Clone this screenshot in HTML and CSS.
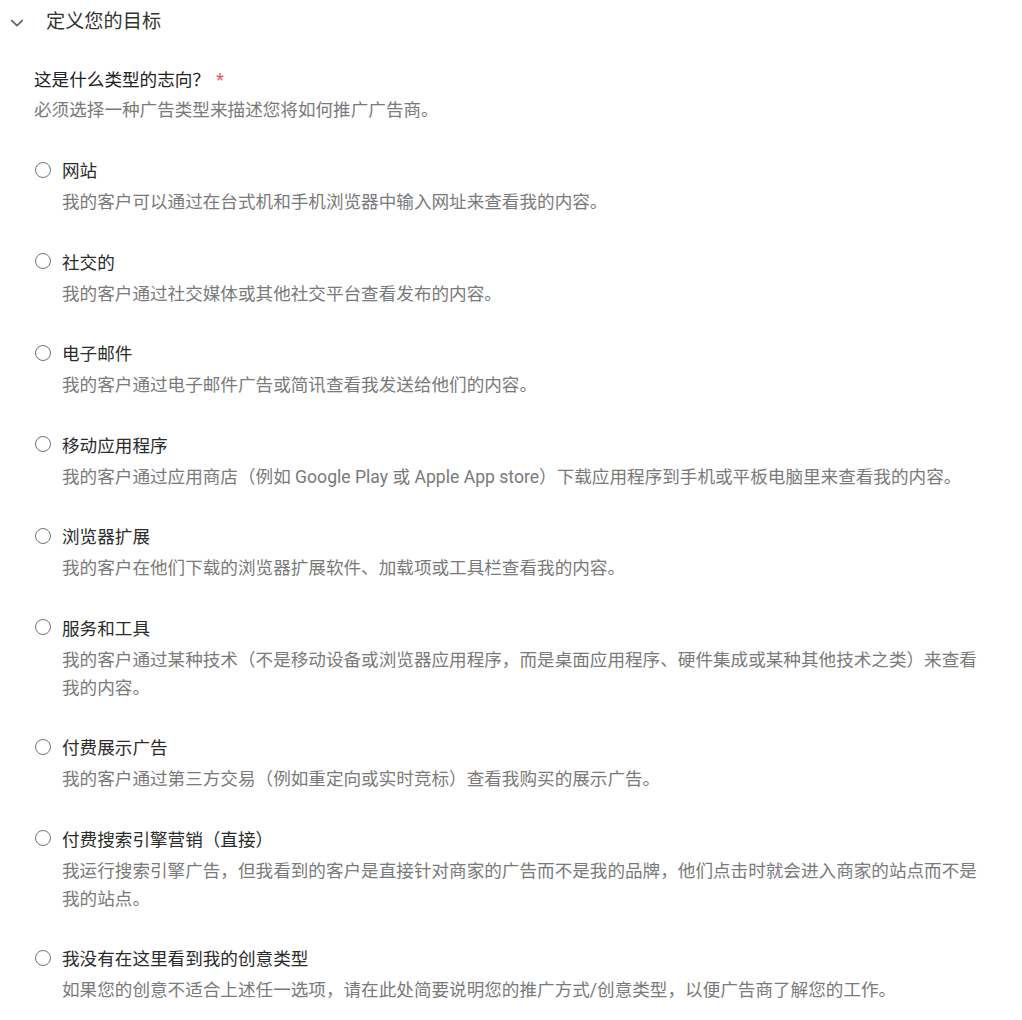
FILE: index.html
```html
<!DOCTYPE html>
<html lang="zh-CN">
<head>
<meta charset="utf-8">
<title>定义您的目标</title>
<link rel="stylesheet" href="styles.css">
</head>
<body>
<div class="page">
  <div class="section-head">
    <svg class="chevron" width="14" height="10" viewBox="0 0 14 10"><path d="M1.8 2.6 L7 7.6 L12.2 2.6" fill="none" stroke="#6a6a6a" stroke-width="1.9" stroke-linecap="round" stroke-linejoin="round"/></svg>
    <span class="section-title">定义您的目标</span>
  </div>
  <div class="question">
    <div class="q-title">这是什么类型的志向？ <span class="req">*</span></div>
    <div class="q-hint">必须选择一种广告类型来描述您将如何推广广告商。</div>
  </div>
  <div class="options">
    <div class="option">
      <div class="opt-row"><span class="radio"></span><span class="opt-label">网站</span></div>
      <div class="opt-desc">我的客户可以通过在台式机和手机浏览器中输入网址来查看我的内容。</div>
    </div>
    <div class="option">
      <div class="opt-row"><span class="radio"></span><span class="opt-label">社交的</span></div>
      <div class="opt-desc">我的客户通过社交媒体或其他社交平台查看发布的内容。</div>
    </div>
    <div class="option">
      <div class="opt-row"><span class="radio"></span><span class="opt-label">电子邮件</span></div>
      <div class="opt-desc">我的客户通过电子邮件广告或简讯查看我发送给他们的内容。</div>
    </div>
    <div class="option">
      <div class="opt-row"><span class="radio"></span><span class="opt-label">移动应用程序</span></div>
      <div class="opt-desc">我的客户通过应用商店（例如 Google Play 或 Apple App store）下载应用程序到手机或平板电脑里来查看我的内容。</div>
    </div>
    <div class="option">
      <div class="opt-row"><span class="radio"></span><span class="opt-label">浏览器扩展</span></div>
      <div class="opt-desc">我的客户在他们下载的浏览器扩展软件、加载项或工具栏查看我的内容。</div>
    </div>
    <div class="option">
      <div class="opt-row"><span class="radio"></span><span class="opt-label">服务和工具</span></div>
      <div class="opt-desc">我的客户通过某种技术（不是移动设备或浏览器应用程序，而是桌面应用程序、硬件集成或某种其他技术之类）来查看我的内容。</div>
    </div>
    <div class="option">
      <div class="opt-row"><span class="radio"></span><span class="opt-label">付费展示广告</span></div>
      <div class="opt-desc">我的客户通过第三方交易（例如重定向或实时竞标）查看我购买的展示广告。</div>
    </div>
    <div class="option">
      <div class="opt-row"><span class="radio"></span><span class="opt-label">付费搜索引擎营销（直接）</span></div>
      <div class="opt-desc">我运行搜索引擎广告，但我看到的客户是直接针对商家的广告而不是我的品牌，他们点击时就会进入商家的站点而不是我的站点。</div>
    </div>
    <div class="option">
      <div class="opt-row"><span class="radio"></span><span class="opt-label">我没有在这里看到我的创意类型</span></div>
      <div class="opt-desc">如果您的创意不适合上述任一选项，请在此处简要说明您的推广方式/创意类型，以便广告商了解您的工作。</div>
    </div>
  </div>
</div>
</body>
</html>
```

FILE: styles.css
```css
html, body {
  margin: 0;
  padding: 0;
  background: #ffffff;
}
body {
  font-family: "Roboto", "Noto Sans CJK SC", sans-serif;
  font-size: 17.6px;
  color: #2b2b2b;
}
.page {
  padding: 8px 0 0 0;
}
.section-head {
  display: flex;
  align-items: center;
  height: 28px;
  padding-left: 10px;
}
.chevron {
  display: block;
  margin-right: 22px;
  margin-top: 1px;
}
.section-title {
  font-size: 19.2px;
  line-height: 28px;
  color: #333333;
}
.question {
  margin-top: 30px;
  padding-left: 34px;
}
.q-title {
  line-height: 28px;
  color: #222222;
}
.req {
  color: #e8585a;
  margin-left: 2px;
}
.q-hint {
  margin-top: 2px;
  line-height: 28px;
  color: #7a7a7a;
}
.options {
  margin-top: 33px;
  padding-left: 35px;
}
.option {
  margin-bottom: 32.5px;
}
.opt-row {
  display: flex;
  align-items: center;
  height: 28px;
}
.radio {
  box-sizing: border-box;
  width: 16px;
  height: 16px;
  border: 1.5px solid #727272;
  border-radius: 50%;
  margin-right: 11px;
  margin-top: -3px;
  flex: none;
}
.opt-label {
  line-height: 28px;
  color: #2b2b2b;
}
.opt-desc {
  margin-top: 3px;
  margin-left: 27px;
  width: 925px;
  line-height: 28px;
  color: #7a7a7a;
}
```
